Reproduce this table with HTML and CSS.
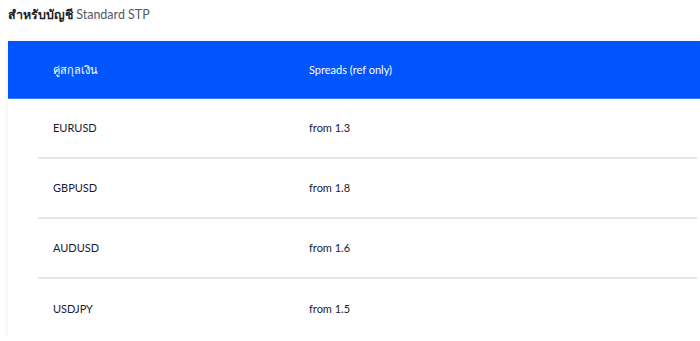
FILE: index.html
```html
<!DOCTYPE html>
<html lang="th">
<head>
    <meta charset="UTF-8">
    <meta name="viewport" content="width=device-width, initial-scale=1.0">
    <title>Spreads - Standard STP</title>
    <link rel="stylesheet" href="styles.css">
</head>
<body>
    <h4 class="account-title"><strong>สำหรับบัญชี</strong> Standard STP</h4>

    <div class="spread-card">
        <div class="spread-head">
            <div>คู่สกุลเงิน</div>
            <div>Spreads (ref only)</div>
        </div>
        <div class="spread-body">
            <div class="spread-row">
                <div>EURUSD</div>
                <div>from 1.3</div>
            </div>
            <div class="spread-row">
                <div>GBPUSD</div>
                <div>from 1.8</div>
            </div>
            <div class="spread-row">
                <div>AUDUSD</div>
                <div>from 1.6</div>
            </div>
            <div class="spread-row">
                <div>USDJPY</div>
                <div>from 1.5</div>
            </div>
        </div>
    </div>
</body>
</html>
```

FILE: styles.css
```css
body {
    margin: 0;
    padding: 0 0 0 8px;
    background-color: #ffffff;
    font-family: Lato, "Noto Sans", sans-serif;
    color: #1a1a33;
    overflow: hidden;
}

.account-title {
    margin: 0;
    height: 41px;
    padding-top: 5px;
    box-sizing: border-box;
    font-size: 12.5px;
    font-weight: 400;
    color: #555a66;
}

.account-title strong {
    color: #1f1f24;
    font-weight: 700;
}

.spread-card {
    width: 692px;
    height: 296px;
    background-color: #ffffff;
    box-shadow: 0 0 4px rgba(0, 0, 0, 0.08);
}

.spread-head {
    display: grid;
    grid-template-columns: 256px 1fr;
    align-items: center;
    height: 57px;
    padding-left: 45px;
    background-color: #0055fe;
    border-bottom: 1px solid #3a7bff;
    color: #ffffff;
    font-size: 11px;
    font-weight: 400;
}

.spread-body {
    margin: 0 3px 0 30px;
}

.spread-row {
    display: grid;
    grid-template-columns: 256px 1fr;
    align-items: center;
    height: 58px;
    padding: 0 0 2px 15px;
    box-sizing: border-box;
    height: 60px;
    border-bottom: 2px solid #e6e6ea;
    font-size: 11px;
}

.spread-row:last-child {
    border-bottom: none;
}
```
